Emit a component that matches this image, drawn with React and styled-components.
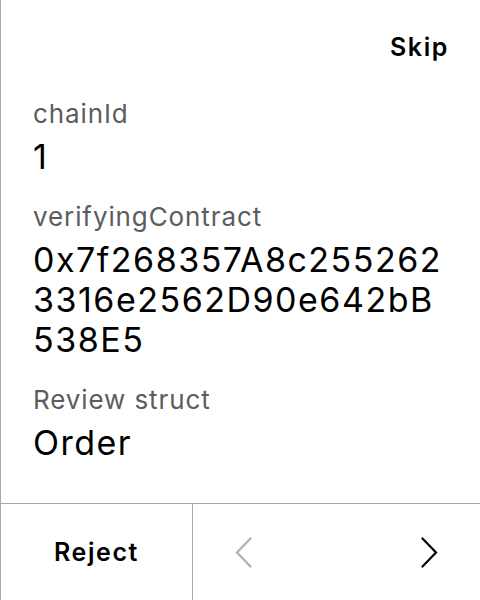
import React from "react";
import styled, { createGlobalStyle } from "styled-components";

const Global = createGlobalStyle`
  html, body { margin: 0; padding: 0; background: #fff; }
  body { font-family: Inter, "Noto Sans", sans-serif; color: #000; }
`;

const Screen = styled.div`
  box-sizing: border-box;
  width: 480px;
  height: 600px;
  border-left: 1px solid #a8a8a8;
  display: flex;
  flex-direction: column;
  background: #fff;
`;

const Header = styled.div`
  display: flex;
  justify-content: flex-end;
  padding: 31px 31px 0 32px;
`;

const TextButton = styled.button`
  border: none;
  background: none;
  padding: 0;
  font-family: inherit;
  font-size: 25px;
  line-height: 32px;
  font-weight: 600;
  letter-spacing: 1.6px;
  color: #000;
  cursor: pointer;
`;

const Content = styled.div`
  flex: 1;
  display: flex;
  flex-direction: column;
  gap: 24px;
  padding: 35px 30px 0 32px;
`;

const Field = styled.div`
  display: flex;
  flex-direction: column;
  gap: 7px;
`;

const Label = styled.div`
  font-size: 26px;
  line-height: 32px;
  letter-spacing: 0.9px;
  color: #5c5c5c;
`;

const Value = styled.div`
  font-size: 34px;
  line-height: 40px;
  letter-spacing: 1.5px;
  color: #000;
  word-break: break-all;
`;

const Footer = styled.div`
  display: grid;
  grid-template-columns: 191px 1fr;
  height: 96px;
  border-top: 1px solid #a8a8a8;
`;

const FooterCell = styled.div`
  display: flex;
  align-items: center;
  justify-content: ${(p) => (p.$split ? "space-between" : "center")};
  padding: ${(p) => (p.$split ? "0 42px" : "0")};
  border-left: ${(p) => (p.$split ? "1px solid #a8a8a8" : "none")};
`;

const Chevron = ({ dir, color }) => (
  <svg width="17" height="31" viewBox="0 0 17 31" fill="none">
    <path
      d={dir === "left" ? "M15.5 1.5 L2 15.5 L15.5 29.5" : "M1.5 1.5 L15 15.5 L1.5 29.5"}
      stroke={color}
      strokeWidth="2.2"
      strokeLinecap="round"
      strokeLinejoin="miter"
    />
  </svg>
);

const IconButton = styled.button`
  border: none;
  background: none;
  padding: 0;
  display: flex;
  cursor: pointer;
`;

export default function App() {
  return (
    <>
      <Global />
      <Screen>
        <Header>
          <TextButton>Skip</TextButton>
        </Header>
        <Content>
          <Field>
            <Label>chainId</Label>
            <Value>1</Value>
          </Field>
          <Field>
            <Label>verifyingContract</Label>
            <Value>0x7f268357A8c2552623316e2562D90e642bB538E5</Value>
          </Field>
          <Field>
            <Label>Review struct</Label>
            <Value>Order</Value>
          </Field>
        </Content>
        <Footer>
          <FooterCell>
            <TextButton>Reject</TextButton>
          </FooterCell>
          <FooterCell $split>
            <IconButton>
              <Chevron dir="left" color="#b0b0b0" />
            </IconButton>
            <IconButton>
              <Chevron dir="right" color="#000" />
            </IconButton>
          </FooterCell>
        </Footer>
      </Screen>
    </>
  );
}
